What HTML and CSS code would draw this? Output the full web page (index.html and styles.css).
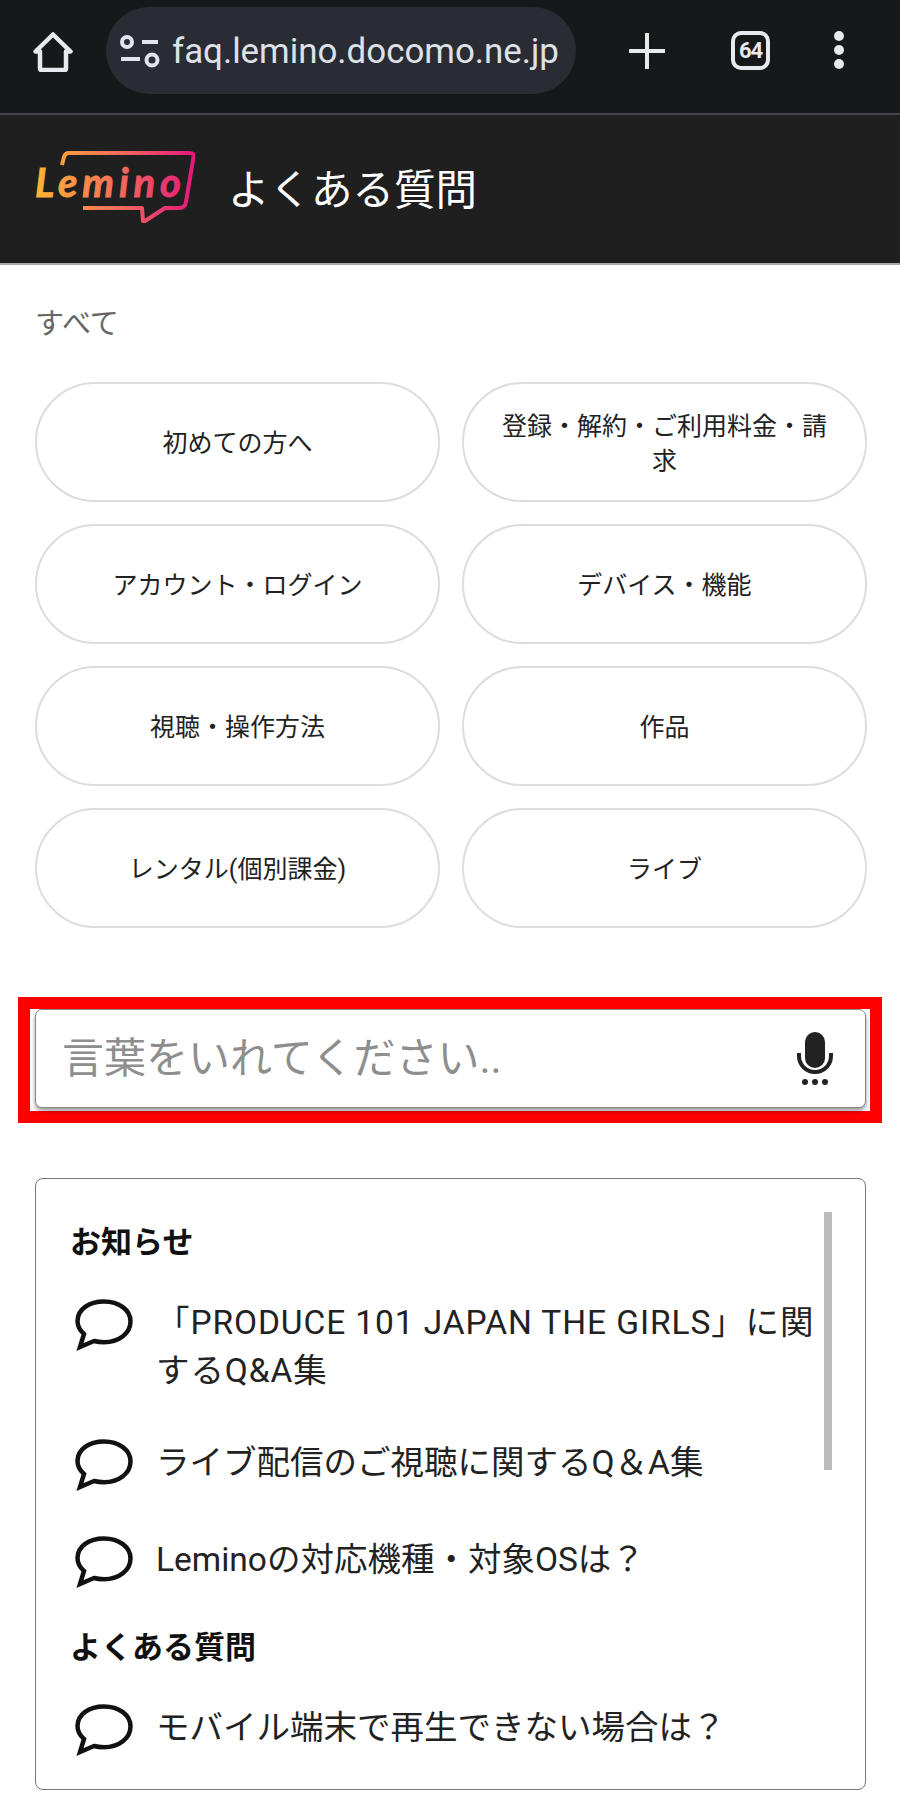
FILE: index.html
```html
<!DOCTYPE html>
<html lang="ja">
<head>
    <meta charset="UTF-8">
    <meta name="viewport" content="width=device-width, initial-scale=1.0">
    <title>よくある質問</title>
    <link rel="stylesheet" href="styles.css">
</head>
<body>
    <div class="browser-bar">
        <svg class="home-icon" viewBox="0 0 40 40" width="40" height="40">
            <path d="M2.500 19.500 20 2.500l17.500 17H33v17a1.500 1.500 0 0 1-1.500 1.500h-23A1.500 1.500 0 0 1 7 36.500v-17z" fill="none" stroke="#e8e9ee" stroke-width="4.500" stroke-linejoin="round"/>
        </svg>
        <div class="url-pill">
            <svg class="tune-icon" viewBox="0 0 40 40" width="40" height="40">
                <circle cx="7" cy="12" r="5" fill="none" stroke="#e3e5ec" stroke-width="4"/>
                <path d="M22 12h16M1 29h19" stroke="#e3e5ec" stroke-width="4"/>
                <circle cx="32" cy="30" r="5.500" fill="none" stroke="#e3e5ec" stroke-width="4"/>
            </svg>
            <span class="url-text">faq.lemino.docomo.ne.jp</span>
        </div>
        <svg class="plus-icon" viewBox="0 0 36 36" width="36" height="36">
            <path d="M18 1v34M1 18h34" stroke="#e8e9ee" stroke-width="4" stroke-linecap="round"/>
        </svg>
        <div class="tab-count">64</div>
        <div class="menu-dots"><i></i><i></i><i></i></div>
    </div>

    <header class="site-header">
        <svg class="logo" viewBox="0 0 160 74" width="160" height="74">
            <defs>
                <linearGradient id="frame-grad" gradientUnits="userSpaceOnUse" x1="0" y1="0" x2="160" y2="0">
                    <stop offset="0" stop-color="#fdb633"/>
                    <stop offset="0.5" stop-color="#f4705a"/>
                    <stop offset="1" stop-color="#e6157c"/>
                </linearGradient>
            </defs>
            <path d="M27 15 29 7Q30 3 34 3H155Q159 3 158.500 7L151 52Q150 58 144 58H130L110 71 108 71 107 58H48" fill="none" stroke="url(#frame-grad)" stroke-width="4" stroke-linejoin="round"/>
            <text class="logo-text" x="0" y="47" textLength="146" fill="url(#frame-grad)" stroke="url(#frame-grad)">Lemino</text>
        </svg>
        <h1>よくある質問</h1>
    </header>

    <main class="content">
        <p class="all-link">すべて</p>
        <div class="category-grid">
            <a class="category">初めての方へ</a>
            <a class="category">登録・解約・ご利用料金・請求</a>
            <a class="category">アカウント・ログイン</a>
            <a class="category">デバイス・機能</a>
            <a class="category">視聴・操作方法</a>
            <a class="category">作品</a>
            <a class="category">レンタル(個別課金)</a>
            <a class="category">ライブ</a>
        </div>

        <div class="search-highlight">
            <div class="search-box">
                <span class="placeholder">言葉をいれてください..</span>
                <svg class="mic-icon" viewBox="0 0 36 54" width="36" height="54">
                    <rect x="8" y="0" width="20" height="36" rx="10" fill="#222"/>
                    <path d="M2 21v3a16 16 0 0 0 32 0v-3" fill="none" stroke="#222" stroke-width="4"/>
                    <circle cx="8" cy="50" r="3" fill="#222"/>
                    <circle cx="18" cy="50" r="3" fill="#222"/>
                    <circle cx="28" cy="50" r="3" fill="#222"/>
                </svg>
            </div>
        </div>

        <section class="faq-panel">
            <div class="scroll-thumb"></div>
            <h2>お知らせ</h2>
            <ul class="faq-list">
                <li class="faq-item">
                    <svg class="bubble" viewBox="0 0 58 52" width="58" height="52"><path d="M29 2.500C14 2.500 2.500 10.500 2.500 22c0 5.500 2.500 9.500 6.500 13L5 48l14-6c3 .8 6.500 1.200 10 1.200 15 0 26.500-9 26.500-20.700S44 2.500 29 2.500z" fill="none" stroke="#111" stroke-width="4.500"/></svg>
                    <span class="wide-latin">「PRODUCE 101 JAPAN THE GIRLS」に関するQ&amp;A集</span>
                </li>
                <li class="faq-item">
                    <svg class="bubble" viewBox="0 0 58 52" width="58" height="52"><path d="M29 2.500C14 2.500 2.500 10.500 2.500 22c0 5.500 2.500 9.500 6.500 13L5 48l14-6c3 .8 6.500 1.200 10 1.200 15 0 26.500-9 26.500-20.700S44 2.500 29 2.500z" fill="none" stroke="#111" stroke-width="4.500"/></svg>
                    <span>ライブ配信のご視聴に関するQ＆A集</span>
                </li>
                <li class="faq-item">
                    <svg class="bubble" viewBox="0 0 58 52" width="58" height="52"><path d="M29 2.500C14 2.500 2.500 10.500 2.500 22c0 5.500 2.500 9.500 6.500 13L5 48l14-6c3 .8 6.500 1.200 10 1.200 15 0 26.500-9 26.500-20.700S44 2.500 29 2.500z" fill="none" stroke="#111" stroke-width="4.500"/></svg>
                    <span>Leminoの対応機種・対象OSは？</span>
                </li>
            </ul>
            <h2 class="second-heading">よくある質問</h2>
            <ul class="faq-list">
                <li class="faq-item">
                    <svg class="bubble" viewBox="0 0 58 52" width="58" height="52"><path d="M29 2.500C14 2.500 2.500 10.500 2.500 22c0 5.500 2.500 9.500 6.500 13L5 48l14-6c3 .8 6.500 1.200 10 1.200 15 0 26.500-9 26.500-20.700S44 2.500 29 2.500z" fill="none" stroke="#111" stroke-width="4.500"/></svg>
                    <span>モバイル端末で再生できない場合は？</span>
                </li>
            </ul>
        </section>
    </main>
</body>
</html>
```

FILE: styles.css
```css
* {
    box-sizing: border-box;
}
body {
    margin: 0;
    background: #fff;
    font-family: Roboto, "Noto Sans CJK JP", sans-serif;
    color: #222;
}
.browser-bar {
    display: flex;
    align-items: center;
    height: 115px;
    padding: 7px 0 20px 33px;
    background: #17181a;
    border-bottom: 2px solid #45464c;
}
.home-icon {
    flex: none;
    margin-top: 3px;
}
.url-pill {
    display: flex;
    align-items: center;
    width: 470px;
    height: 87px;
    margin-left: 33px;
    padding-left: 14px;
    background: #2a2c33;
    border-radius: 44px;
}
.tune-icon {
    flex: none;
}
.url-text {
    margin: 2px 0 0 12px;
    font-size: 34.900px;
    color: #dfe1e8;
    white-space: nowrap;
}
.plus-icon {
    flex: none;
    margin-left: 53px;
    margin-top: 1px;
}
.tab-count {
    display: flex;
    align-items: center;
    justify-content: center;
    width: 39px;
    height: 39px;
    margin-left: 66px;
    border: 4px solid #e8e9ee;
    border-radius: 10px;
    font-size: 22px;
    font-weight: 700;
    letter-spacing: -1px;
    color: #e8e9ee;
}
.menu-dots {
    display: flex;
    flex-direction: column;
    gap: 4px;
    margin-left: 64px;
}
.menu-dots i {
    width: 10px;
    height: 10px;
    border-radius: 50%;
    background: #e8e9ee;
}
.site-header {
    display: flex;
    align-items: center;
    height: 150px;
    padding-left: 35px;
    background: #1f1f1f;
    border-bottom: 2px solid #a8a8a8;
}
.logo {
    flex: none;
    margin-bottom: 4px;
}
.logo-text {
    font-family: Lato, sans-serif;
    font-size: 40px;
    font-style: italic;
    font-weight: 700;
    stroke-width: 0.8px;
}
.site-header h1 {
    margin: 0 0 5px 33px;
    font-size: 41.500px;
    font-weight: 400;
    color: #fff;
}
.content {
    padding: 0 34px 0 35px;
}
.all-link {
    margin: 0;
    padding-top: 39px;
    height: 117px;
    font-size: 29px;
    line-height: 40px;
    color: #666;
}
.category-grid {
    display: grid;
    grid-template-columns: 405px 405px;
    grid-auto-rows: 120px;
    gap: 22px;
}
.category {
    display: flex;
    align-items: center;
    justify-content: center;
    padding: 3px 36px 0;
    border: 2px solid #ddd;
    border-radius: 60px;
    font-size: 25px;
    line-height: 35px;
    text-align: center;
    color: #222;
}
.search-highlight {
    margin: 69px -16px 0 -17px;
    border: 12px solid #f00;
    height: 126px;
    padding: 0 4px 0 5px;
}
.search-box {
    display: flex;
    align-items: center;
    justify-content: space-between;
    height: 99px;
    padding: 0 32px 0 26px;
    border: 1px solid #888;
    border-radius: 7px;
    box-shadow: 0 3px 4px rgba(0, 0, 0, 0.4);
    background: #fff;
}
.placeholder {
    margin-bottom: 8px;
    font-size: 42px;
    color: #8e8e8e;
}
.mic-icon {
    flex: none;
}
.faq-panel {
    position: relative;
    height: 612px;
    margin-top: 55px;
    padding: 42px 34px 0;
    border: 1.500px solid #777;
    border-radius: 8px;
}
.scroll-thumb {
    position: absolute;
    top: 33px;
    right: 33px;
    width: 8px;
    height: 258px;
    background: #bbb;
}
.faq-panel h2 {
    margin: 0 0 12px;
    font-size: 31px;
    line-height: 44px;
    font-weight: 700;
    color: #111;
}
.faq-panel .second-heading {
    margin-top: 17px;
}
.faq-list {
    margin: 0;
    padding: 0;
    list-style: none;
}
.faq-item {
    display: flex;
    align-items: flex-start;
    gap: 23px;
    padding: 22px 0 21px;
    font-size: 33.500px;
    line-height: 47.500px;
    color: #222;
}
.faq-item + .faq-item {
    margin-top: 2px;
}
.bubble {
    flex: none;
    margin-left: 5px;
    margin-top: 0;
}
.faq-item span {
    width: 660px;
}
.wide-latin {
    letter-spacing: 0.9px;
}
```
